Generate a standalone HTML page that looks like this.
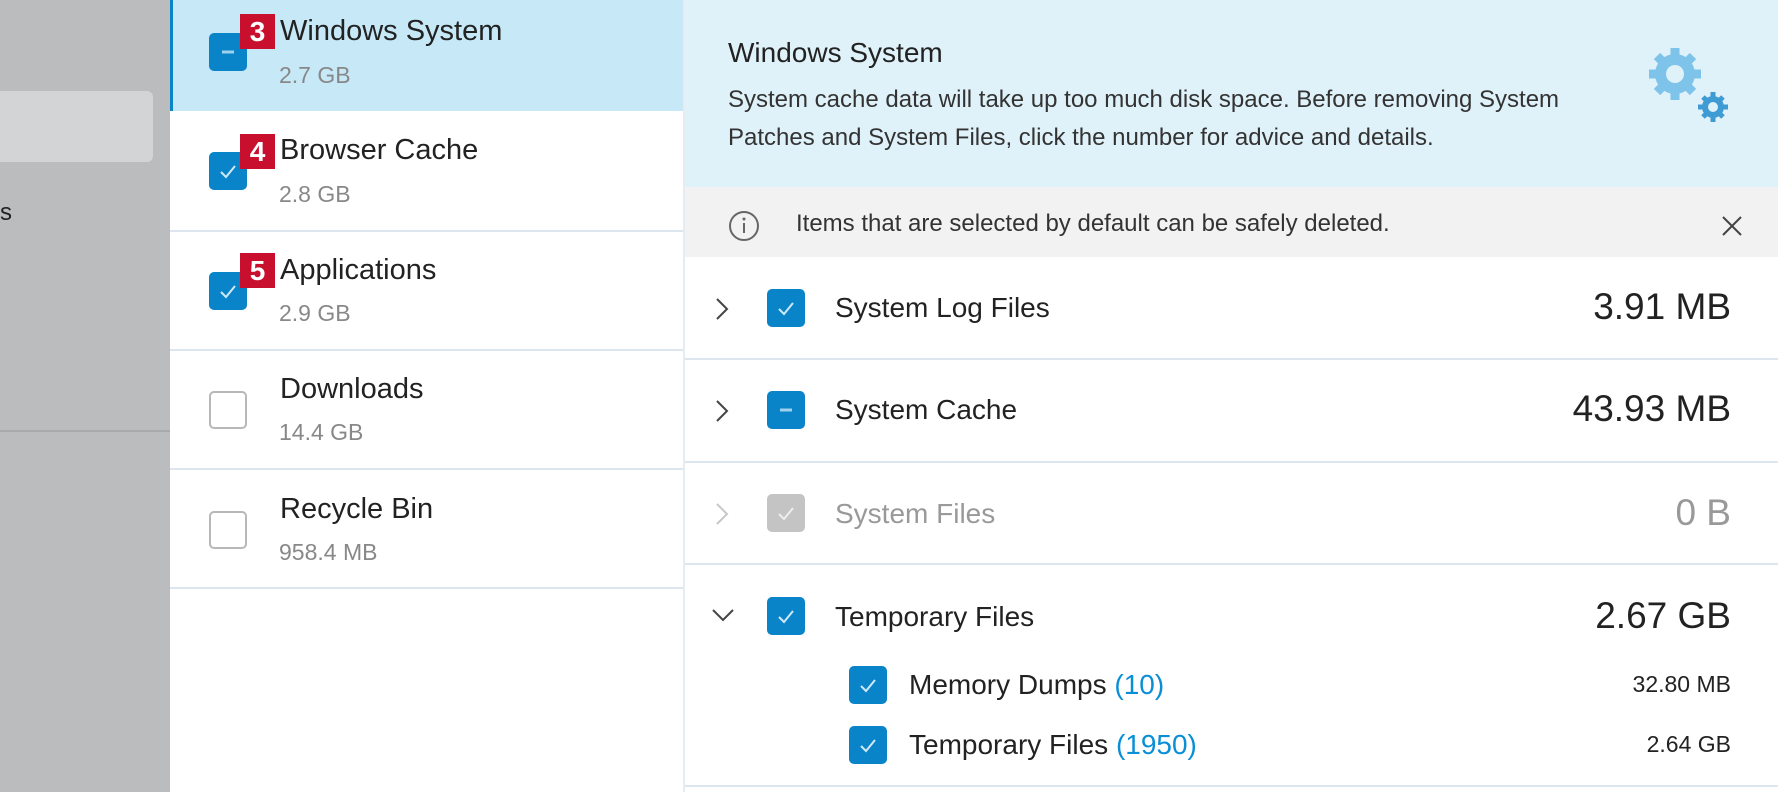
<!DOCTYPE html>
<html><head><meta charset="utf-8"><style>
*{margin:0;padding:0;box-sizing:border-box}
body{width:1778px;height:792px;overflow:hidden;position:relative;background:#fff;font-family:"Liberation Sans",sans-serif;color:#222}
.a{position:absolute;white-space:nowrap}
.cb{position:absolute;width:38px;height:38px;border-radius:5px;background:#0a84c8}
.cb.e{background:#fff;border:2px solid #b8b8b8}
.cb.g{background:#c4c4c4}
.cb svg{position:absolute;left:0;top:0}
.badge{position:absolute;width:35px;height:35px;background:#c8102e;color:#fff;font-weight:bold;font-size:28px;text-align:center;line-height:35px}
.hl{position:absolute;height:2px;background:#dde6ee}
</style></head><body>
<div class="a" style="left:0;top:0;width:170px;height:792px;background:#bbbcbd"></div>
<div class="a" style="left:0;top:91px;width:153px;height:71px;background:#d2d4d5;border-radius:0 6px 6px 0"></div>
<div class="a" style="left:0;top:199px;font-size:24px;color:#222">s</div>
<div class="a" style="left:0;top:430px;width:170px;height:2px;background:#a8aaab"></div>
<div class="a" style="left:170px;top:0;width:514px;height:111px;background:#c6e8f7;border-left:3px solid #0a84c8"></div>
<div class="hl" style="left:170px;top:230px;width:514px"></div>
<div class="hl" style="left:170px;top:349px;width:514px"></div>
<div class="hl" style="left:170px;top:468px;width:514px"></div>
<div class="hl" style="left:170px;top:587px;width:514px"></div>
<div class="a" style="left:683px;top:0;width:2px;height:792px;background:#e6ecef"></div>

<div class="cb" style="left:209px;top:33px"><svg width="38" height="38"><path d="M13 19h12" stroke="#9fd0ec" stroke-width="3"/></svg></div>
<div class="badge" style="left:240px;top:14px">3</div>
<div class="a" style="left:280px;top:15px;font-size:29px">Windows System</div>
<div class="a" style="left:279px;top:62px;font-size:23px;color:#888">2.7 GB</div>

<div class="cb" style="left:209px;top:152px"><svg width="38" height="38"><path d="M12 20l5 5 9-11" stroke="#cfe9f7" stroke-width="2" fill="none"/></svg></div>
<div class="badge" style="left:240px;top:134px">4</div>
<div class="a" style="left:280px;top:134px;font-size:29px">Browser Cache</div>
<div class="a" style="left:279px;top:181px;font-size:23px;color:#888">2.8 GB</div>

<div class="cb" style="left:209px;top:272px"><svg width="38" height="38"><path d="M12 20l5 5 9-11" stroke="#cfe9f7" stroke-width="2" fill="none"/></svg></div>
<div class="badge" style="left:240px;top:253px">5</div>
<div class="a" style="left:280px;top:254px;font-size:29px">Applications</div>
<div class="a" style="left:279px;top:300px;font-size:23px;color:#888">2.9 GB</div>

<div class="cb e" style="left:209px;top:391px"></div>
<div class="a" style="left:280px;top:373px;font-size:29px">Downloads</div>
<div class="a" style="left:279px;top:419px;font-size:23px;color:#888">14.4 GB</div>

<div class="cb e" style="left:209px;top:511px"></div>
<div class="a" style="left:280px;top:493px;font-size:29px">Recycle Bin</div>
<div class="a" style="left:279px;top:539px;font-size:23px;color:#888">958.4 MB</div>

<div class="a" style="left:685px;top:0;width:1093px;height:187px;background:#dff1f9"></div>
<div class="a" style="left:728px;top:37px;font-size:28px">Windows System</div>
<div class="a" style="left:728px;top:81px;font-size:24px;line-height:38px;color:#333">System cache data will take up too much disk space. Before removing System<br>Patches and System Files, click the number for advice and details.</div>
<svg class="a" style="left:1645px;top:44px" width="90" height="84" viewBox="0 0 90 84">
<g fill="#7ec3ea"><circle cx="30" cy="30" r="20"/>
<g stroke="#7ec3ea" stroke-width="9"><path d="M30 4v52M4 30h52M12 12l36 36M48 12L12 48"/></g></g>
<circle cx="30" cy="30" r="9" fill="#dff1f9"/>
<g fill="#3f9bd4"><circle cx="68" cy="63" r="11"/><g stroke="#3f9bd4" stroke-width="5"><path d="M68 48v30M53 63h30M58 53l20 20M78 53L58 73"/></g></g>
<circle cx="68" cy="63" r="5" fill="#dff1f9"/>
</svg>
<div class="a" style="left:685px;top:187px;width:1093px;height:70px;background:#f2f2f2"></div>
<svg class="a" style="left:727px;top:209px" width="34" height="34"><circle cx="17" cy="17" r="14" fill="none" stroke="#666" stroke-width="2"/><path d="M17 14v10" stroke="#666" stroke-width="2"/><circle cx="17" cy="10" r="1.5" fill="#666"/></svg>
<div class="a" style="left:796px;top:210px;font-size:24px;color:#333">Items that are selected by default can be safely deleted.</div>
<svg class="a" style="left:1720px;top:214px" width="24" height="24"><path d="M3 3l18 18M21 3L3 21" stroke="#444" stroke-width="2"/></svg>
<div class="hl" style="left:685px;top:358px;width:1093px"></div>
<div class="hl" style="left:685px;top:461px;width:1093px"></div>
<div class="hl" style="left:685px;top:563px;width:1093px"></div>
<div class="hl" style="left:685px;top:785px;width:1093px"></div>

<svg class="a" style="left:712px;top:296px" width="20" height="26"><path d="M5 3l10 10-10 10" stroke="#444" stroke-width="2" fill="none"/></svg>
<div class="cb" style="left:767px;top:289px"><svg width="38" height="38"><path d="M12 20l5 5 9-11" stroke="#cfe9f7" stroke-width="2" fill="none"/></svg></div>
<div class="a" style="left:835px;top:292px;font-size:28px">System Log Files</div>
<div class="a" style="right:47px;top:286px;font-size:37px">3.91 MB</div>

<svg class="a" style="left:712px;top:398px" width="20" height="26"><path d="M5 3l10 10-10 10" stroke="#444" stroke-width="2" fill="none"/></svg>
<div class="cb" style="left:767px;top:391px"><svg width="38" height="38"><path d="M13 19h12" stroke="#9fd0ec" stroke-width="3"/></svg></div>
<div class="a" style="left:835px;top:394px;font-size:28px">System Cache</div>
<div class="a" style="right:47px;top:388px;font-size:37px">43.93 MB</div>

<svg class="a" style="left:712px;top:501px" width="20" height="26"><path d="M5 3l10 10-10 10" stroke="#c8c8c8" stroke-width="2" fill="none"/></svg>
<div class="cb g" style="left:767px;top:494px"><svg width="38" height="38"><path d="M12 20l5 5 9-11" stroke="#eee" stroke-width="2" fill="none"/></svg></div>
<div class="a" style="left:835px;top:498px;font-size:28px;color:#999">System Files</div>
<div class="a" style="right:47px;top:492px;font-size:37px;color:#999">0 B</div>

<svg class="a" style="left:710px;top:605px" width="26" height="20"><path d="M3 5l10 10 10-10" stroke="#444" stroke-width="2" fill="none"/></svg>
<div class="cb" style="left:767px;top:597px"><svg width="38" height="38"><path d="M12 20l5 5 9-11" stroke="#cfe9f7" stroke-width="2" fill="none"/></svg></div>
<div class="a" style="left:835px;top:601px;font-size:28px">Temporary Files</div>
<div class="a" style="right:47px;top:595px;font-size:37px">2.67 GB</div>

<div class="cb" style="left:849px;top:666px"><svg width="38" height="38"><path d="M12 20l5 5 9-11" stroke="#cfe9f7" stroke-width="2" fill="none"/></svg></div>
<div class="a" style="left:909px;top:669px;font-size:28px">Memory Dumps <span style="color:#0a8fd6">(10)</span></div>
<div class="a" style="right:47px;top:671px;font-size:23px">32.80 MB</div>

<div class="cb" style="left:849px;top:726px"><svg width="38" height="38"><path d="M12 20l5 5 9-11" stroke="#cfe9f7" stroke-width="2" fill="none"/></svg></div>
<div class="a" style="left:909px;top:729px;font-size:28px">Temporary Files <span style="color:#0a8fd6">(1950)</span></div>
<div class="a" style="right:47px;top:731px;font-size:23px">2.64 GB</div>
</body></html>
